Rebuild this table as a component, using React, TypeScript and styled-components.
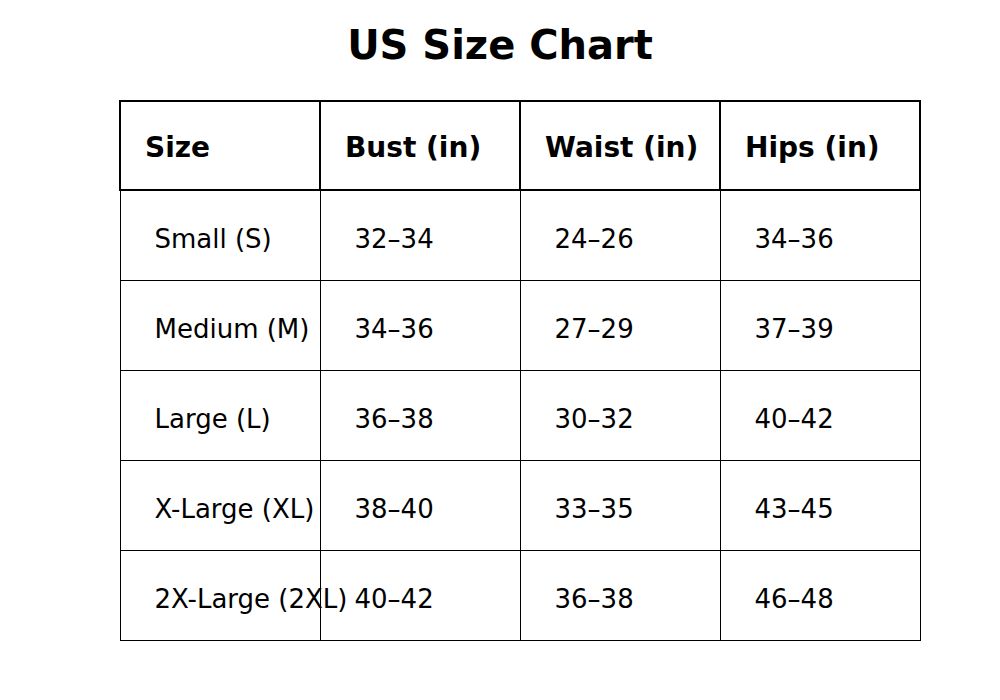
import { FC } from "react";
import styled, { createGlobalStyle } from "styled-components";

const GlobalStyle = createGlobalStyle`
  html, body {
    margin: 0;
    padding: 0;
    background: #ffffff;
  }
  body {
    font-family: "DejaVu Sans", "Liberation Sans", sans-serif;
    color: #000000;
  }
`;

const Page = styled.div`
  width: 1000px;
  height: 700px;
  display: flex;
  flex-direction: column;
  align-items: center;
  background: #ffffff;
`;

const Title = styled.h1`
  margin: 21px 0 0;
  height: 79px;
  font-size: 40px;
  font-weight: bold;
  line-height: 48px;
`;

const Table = styled.table`
  border-collapse: collapse;
  table-layout: fixed;
  width: 800px;
  margin-left: 40px;
`;

const Column = styled.col`
  width: 200px;
`;

const HeadCell = styled.th`
  box-sizing: border-box;
  height: 89px;
  padding: 4px 0 0 24px;
  border: 2px solid #000000;
  text-align: left;
  font-size: 28px;
  font-weight: bold;
  white-space: nowrap;
`;

const Cell = styled.td`
  box-sizing: border-box;
  height: 90px;
  padding: 8px 0 0 34px;
  border: 1px solid #000000;
  font-size: 26px;
  white-space: nowrap;
  overflow: visible;
`;

const headers = ["Size", "Bust (in)", "Waist (in)", "Hips (in)"];

const rows = [
  ["Small (S)", "32–34", "24–26", "34–36"],
  ["Medium (M)", "34–36", "27–29", "37–39"],
  ["Large (L)", "36–38", "30–32", "40–42"],
  ["X-Large (XL)", "38–40", "33–35", "43–45"],
  ["2X-Large (2XL)", "40–42", "36–38", "46–48"],
];

const App: FC = () => {
  return (
    <Page>
      <GlobalStyle />
      <Title>US Size Chart</Title>
      <Table>
        <colgroup>
          {headers.map((h) => (
            <Column key={h} />
          ))}
        </colgroup>
        <thead>
          <tr>
            {headers.map((h) => (
              <HeadCell key={h}>{h}</HeadCell>
            ))}
          </tr>
        </thead>
        <tbody>
          {rows.map((row) => (
            <tr key={row[0]}>
              {row.map((value, i) => (
                <Cell key={i}>{value}</Cell>
              ))}
            </tr>
          ))}
        </tbody>
      </Table>
    </Page>
  );
};

export default App;
